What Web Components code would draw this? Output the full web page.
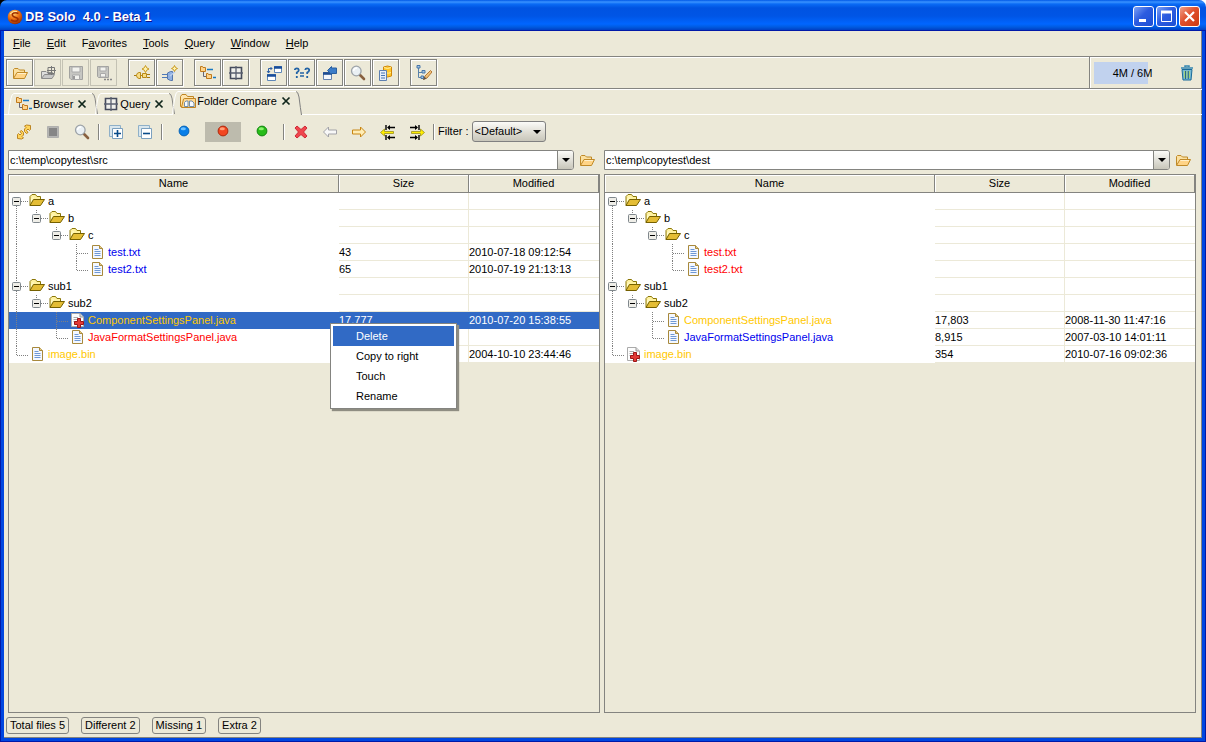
<!DOCTYPE html>
<html lang="en">
<head>
<meta charset="utf-8">
<title>DB Solo 4.0 - Beta 1</title>
<style>
html,body{margin:0;height:100%}
body{background:linear-gradient(90deg,#000 50%,#fff 50%);font:11px/17px "Liberation Sans",sans-serif;color:#000;overflow:hidden}
</style>
</head>
<body>
<db-app></db-app>
<script>
const ICONS = {
  logo:'<defs><radialGradient id="g" cx=".4" cy=".25" r=".8"><stop offset="0" stop-color="#ffd070"/><stop offset=".45" stop-color="#f07818"/><stop offset="1" stop-color="#8c2400"/></radialGradient></defs><circle cx="8" cy="8" r="7.300" fill="url(#g)"/><path d="M11.500 4.500C8 3 4.500 4 5.500 6.500S11.500 8 11 10.500S6 12.500 4 11" fill="none" stroke="#a03000" stroke-width="1.600"/><path d="M3 5Q6 1.500 10 2.500" stroke="#ffe8a0" fill="none"/>',
  open:'<path d="M1.500 13V4.500L2.500 3.500H6L7.500 5H12.500V7" fill="#fbe0a0" stroke="#c08a28"/><path d="M1.500 13.500L5 7.500H15.500L12.500 13.500Z" fill="#ffd487" stroke="#c08a28"/><path d="M5.500 8.500H14" stroke="#fff0cc"/>',
  openSql:'<path d="M1.500 13V6.500H6L7 7.500H12.500V9" fill="#ddd" stroke="#8c8c8c"/><path d="M1.500 13.500L4.500 9.500H14.500L12 13.500Z" fill="#c8c8c8" stroke="#8c8c8c"/><path d="M8 2.500H14.500V8.500H8ZM11.500 1V10M7 5.500H16" fill="none" stroke="#777"/>',
  save:'<path d="M1.500 1.500H14.500V14.500H3L1.500 13Z" fill="#c6c6c2" stroke="#a2a2a0"/><path d="M4 2H12V7H4ZM4.500 10H11.500V14.500H4.500Z" fill="#f2f2ee" stroke="#aaa"/><path d="M6 11V14" stroke="#999" stroke-width="2"/>',
  saveAs:'<path d="M1.500 1.500H12.500V12.500H2.500L1.500 11.500Z" fill="#c6c6c2" stroke="#a2a2a0"/><path d="M4 2H10V6H4ZM4.500 8.500H9.500V12H4.500Z" fill="#f2f2ee" stroke="#aaa"/><path d="M8 14.500H10M11 14.500H13M14 14.500H16" stroke="#888" stroke-width="1.500"/>',
  connect:'<path d="M0 10.500H3M13 9.500H16M13 12.500H16" stroke="#a87a10"/><path d="M6.500 7.500H5Q2.500 8 2.500 10.500T5 13.500H6.500ZM8.500 8.500H12.500V12.500H8.500ZM6.500 10.500H8.500" fill="#f9dd84" stroke="#b88a18"/><path d="M11.500 .5L12.700 2.800L15 4L12.700 5.200L11.500 7.500L10.300 5.200L8 4L10.300 2.800Z" fill="#fff3b0" stroke="#c9981c"/>',
  disconnect:'<path d="M0 9.500H6M0 12.500H6" stroke="#4d79b8"/><path d="M5.500 8L8.500 6.500H10.500V15.500H8.500L5.500 14Z" fill="#8fb0e2" stroke="#5577ad"/><path d="M8 11L13 6.500" stroke="#b5cbee" stroke-width="1.500"/><path d="M12.500 .5L13.500 2.500L15.500 3.500L13.500 4.500L12.500 6.500L11.500 4.500L9.500 3.500L11.500 2.500Z" fill="#fff3b0" stroke="#c9981c"/>',
  tree:'<path d="M3.500 6V11.500H6" fill="none" stroke="#667"/><path d="M.5 1.500H2.500L3 2.500H5.500V6.500H.5ZM6.500 8.500H8L8.500 9.500H11.500V13.500H6.500Z" fill="#ffd48b" stroke="#c07a1c"/><path d="M7 4.500H13M13 12.500H16" stroke="#1878c0" stroke-width="1.600"/>',
  grid:'<path d="M2.500 2.500H13.500V13.500H2.500Z" fill="#f0f0ec" stroke="#454b5c" stroke-width="1.600"/><path d="M8 1V15M1 8H15" stroke="#5a6070" stroke-width="1.300"/>',
  compare:'<path d="M8.500 1.500H15.500V7.500H8.500ZM1.500 9.500H9.500V15.500H1.500Z" fill="#fff" stroke="#5f87b8"/><path d="M8 2.500H16M1 10.500H10" stroke="#184d9b" stroke-width="2.600"/><path d="M2.500 8V3.500H6M1 6L2.500 8L4 6M4.500 2L6 3.500L4.500 5" stroke="#2d5fa5" fill="none"/>',
  sync:'<path d="M1.500 7.500H9.500V14.500H1.500Z" fill="#f4f7fc" stroke="#6583b0"/><path d="M1 8.500H10" stroke="#1d4c92" stroke-width="2.600"/><path d="M5.500 5.500L9.500 1.500V3H14.500V8.500H9.500V9.500Z" fill="#3b7cc8" stroke="#2a5f9f"/>',
  diff:'<path d="M.8 5Q1 3.300 2.800 3.300T4.800 5Q4.800 6.500 2.800 7.500V9M2.800 11V13M11.200 5Q11.400 3.300 13.200 3.300T15.200 5Q15.200 6.500 13.200 7.500V9M13.200 11V13" fill="none" stroke="#2263a5" stroke-width="1.800"/><path d="M6 8H10M6 11H10" stroke="#2263a5" stroke-width="1.300"/>',
  search:'<path d="M9.500 9.500L14 14" stroke="#886040" stroke-width="2.600" stroke-linecap="round"/><circle cx="6.300" cy="6" r="4.800" fill="#eaf0f4" stroke="#9da3a8" stroke-width="1.300"/><path d="M3.500 6Q4 3 7 3" stroke="#fff" fill="none" stroke-width="1.500"/>',
  copyDb:'<path d="M5.500 2Q9.500 0 13.500 2V11Q9.500 13 5.500 11Z" fill="#ffc62c" stroke="#d0880a"/><path d="M6 2.500Q9.500 4.500 13 2.500M8 8Q11 8.500 13 7.500" stroke="#fff0a0" fill="none"/><path d="M1.500 5.500H8.500V15.500H1.500Z" fill="#e7eef9" stroke="#5d7fb0"/><path d="M3 8H7M3 10.500H7M3 13H7" stroke="#4675b2"/>',
  treeEdit:'<path d="M2.500 2V12.500H7M2.500 7.500H7" fill="none" stroke="#5881aa"/><path d="M1 .5H4V3H1ZM6 5.500H9V8H6ZM5 11H7.500V13.500H5Z" fill="#a7c5e4" stroke="#4776a8"/><path d="M7.500 14.500L9 11L14.500 5.500L16 7L11 13Z" fill="#efc078" stroke="#a66118" stroke-width=".8"/><path d="M7 15L8.500 11.800L10.500 13.500Z" fill="#555"/>',
  trash:'<path d="M3 4.500H13L12 15H4Z" fill="#78bad2" stroke="#176a9a"/><path d="M2 3H14M6 2V1H10V2" fill="none" stroke="#3586b0" stroke-width="1.500"/><path d="M5.500 6V13M8 6V13M10.500 6V13" stroke="#9fd07a"/><path d="M6.500 6V14M9.300 6V14" stroke="#26678a"/>',
  folders:'<path d="M.5 13.500V3.500L2 1.500H6L7.500 3.500H13.500V13.500Z" fill="#ffe6ae" stroke="#c18522"/><path d="M1.500 14.500L3.500 6Q4 5.500 5 5.500H15.500V14.500Z" fill="#ffd890" stroke="#c18522"/><path d="M4.500 13.500V9.500L6 8H8V13.500ZM9.500 13.500V8H12L14 10V13.500Z" fill="#f7fbff" stroke="#728eaa"/>',
  close:'<path d="M4.500 4.500L11.500 11.500M11.500 4.500L4.500 11.500" stroke="#10261b" stroke-width="1.700"/>',
  refresh:'<path d="M8.500 7.500V5L10 3.500L8.500 2L10.500 1L14.500 1.500V5.500L13.500 6.500L12 5L10.500 6.500L12 8.500L10.500 9.500Z" fill="#ffd55c" stroke="#b67a14" stroke-width=".9"/><path d="M7.500 8.500V11L6 12.500L7.500 14L5.500 15L1.500 14.500V10.500L2.500 9.500L4 11L5.500 9.500L4 7.500L5.500 6.500Z" fill="#ffd55c" stroke="#b67a14" stroke-width=".9"/>',
  stop:'<path d="M2.500 2.500H13.500V13.500H2.500Z" fill="#b5b5b3" stroke="#b0b0ae"/><path d="M4 4H12V12H4Z" fill="#868686"/>',
  expand:'<path d="M1.500 1.500H12.500V12.500H1.500Z" fill="#d9e6ed" stroke="#8fb0c8"/><path d="M4.500 4.500H14.500V14.500H4.500Z" fill="#fff" stroke="#7ba0bf"/><path d="M6 9.500H13M9.500 6V13" stroke="#084b89" stroke-width="1.600"/>',
  collapse:'<path d="M1.500 1.500H12.500V12.500H1.500Z" fill="#d9e6ed" stroke="#8fb0c8"/><path d="M4.500 4.500H14.500V14.500H4.500Z" fill="#fff" stroke="#7ba0bf"/><path d="M6 9.500H13" stroke="#084b89" stroke-width="1.600"/>',
  blue:'<circle cx="8" cy="7" r="4.900" fill="#087ee8" stroke="#0864b7"/><ellipse cx="7.300" cy="4.800" rx="2.600" ry="1.500" fill="#70c2ff"/>',
  red:'<circle cx="8" cy="7" r="4.900" fill="#f24620" stroke="#ae2a0e"/><ellipse cx="7.300" cy="4.800" rx="2.600" ry="1.500" fill="#ff9f78"/>',
  green:'<circle cx="8" cy="7" r="4.900" fill="#27bc18" stroke="#148511"/><ellipse cx="7.300" cy="4.800" rx="2.600" ry="1.500" fill="#8cf26f"/>',
  remove:'<path d="M2 4L4 2L8 5.500L12 2L14 4L10.500 8L14 12L12 14L8 10.500L4 14L2 12L5.500 8Z" fill="#f0464e" stroke="#cf2a36"/>',
  left:'<path d="M1.500 8L6.500 3V6H14.500V10H6.500V13Z" fill="#f8f8f8" stroke="#a3a3a8"/>',
  right:'<path d="M14.500 8L9.500 3V6H1.500V10H9.500V13Z" fill="#ffedb5" stroke="#c88614"/>',
  allLeft:'<path d="M.5 8.500L4.500 5V7.500H13.500V9.500H4.500V12Z" fill="#ffee00" stroke="#9a9020" stroke-width=".8"/><path d="M8 3.500H15M8 13.500H15M6 1V6M6 11V16" stroke="#000" stroke-width="1.400"/><path d="M7 3.500L10 1V6ZM7 13.500L10 11V16Z"/>',
  allRight:'<path d="M15.500 8.500L11.500 5V7.500H2.500V9.500H11.500V12Z" fill="#ffee00" stroke="#9a9020" stroke-width=".8"/><path d="M1 3.500H8M1 13.500H8M10 1V6M10 11V16" stroke="#000" stroke-width="1.400"/><path d="M9 3.500L6 1V6ZM9 13.500L6 11V16Z"/>',
  folder:'<path d="M1 12.500V3.500L3 1.500H6.500L8 3.500H11.500V6" fill="#fff2a0" stroke="#8a7608"/><path d="M1 12.500L4.500 6.500H15.500L11.500 12.500Z" fill="#e4bd35" stroke="#756000"/><path d="M2.500 5.500V8M4 4V6" stroke="#fffbd0"/>',
  file:'<path d="M3.500 1.500H10.500L13.500 4.500V14.500H3.500Z" fill="#f4f8ff" stroke="#a8893c"/><path d="M10.500 1.500V4.500H13.500" fill="#e4cc88" stroke="#a8893c"/><path d="M5.500 5.500H9.500M5.500 7.500H11.500M5.500 9.500H11.500M5.500 11.500H11.500" stroke="#6f98d4"/>',
  fileAdd:'<path d="M2.500 1.500H11L14.500 5V14.500H2.500Z" fill="#fdfdfd" stroke="#aaa"/><path d="M11 1.500V5H14" fill="#ddd" stroke="#999"/><path d="M4.500 5.500H9M4.500 7.500H8M4.500 9.500H6" stroke="#aaa"/><path d="M8.500 6.500H11.500V9.500H14.500V12.500H11.500V15.500H8.500V12.500H5.500V9.500H8.500Z" fill="#e33a35" stroke="#9c1515"/>',
  caret:'<path d="M4 6H12L8 10Z" fill="#000"/>'
};
const svg = n => `<svg width="16" height="16" viewBox="0 0 16 16" aria-hidden="true">${ICONS[n]}</svg>`;
const define = (tag, css, html) => customElements.define(tag, class extends HTMLElement {
  connectedCallback() {
    if (this.shadowRoot) return;
    const root = this.attachShadow({mode:'open'});
    root.innerHTML = `<style>*{box-sizing:border-box}button,input,select{font:inherit;color:inherit;margin:0}svg{display:block}${css}</style>` + (typeof html === 'function' ? html(this) : html);
  }
});

define('ui-icon', ':host{display:block;width:16px;height:16px;flex:none}', h => svg(h.getAttribute('name')));

define('title-bar', `
:host{display:flex;align-items:center;gap:2px;height:30px;flex:none;padding:3px 6px 0 7px;box-sizing:border-box;border-radius:7px 7px 0 0;
background:linear-gradient(#0058e6 0,#3a93ff 2px,#0a6bf5 4px,#0053e1 8px,#0055e5 16px,#0066ff 24px,#005be0 27px,#0040c4 30px);color:#fff}
h1{margin:0;font:bold 13px/18px "Liberation Sans",sans-serif;white-space:pre;flex:1;text-shadow:1px 1px #0f1089}
button{width:21px;height:21px;padding:2px;border:1px solid #fff;border-radius:3px;background:linear-gradient(135deg,#7da2f5,#2c5ce0 45%,#1c4fd4)}
.x{background:linear-gradient(135deg,#f0a08a,#e0502c 45%,#cc3a10)}`,
`<ui-icon name="logo"></ui-icon><h1>DB Solo  4.0 - Beta 1</h1>
<button aria-label="Minimize"><svg width="15" height="15"><path d="M3 10H10V13H3Z" fill="#fff"/></svg></button>
<button aria-label="Maximize"><svg width="15" height="15"><path d="M2.500 3V12.500H12.500V3" fill="none" stroke="#fff"/><path d="M2 3H13" stroke="#fff" stroke-width="3"/></svg></button>
<button class="x" aria-label="Close"><svg width="15" height="15"><path d="M3 3L12 12M12 3L3 12" stroke="#fff" stroke-width="2.200"/></svg></button>`);

define('menu-bar', ':host{display:flex;height:26px;flex:none;padding:0 1px;box-sizing:border-box}', '<slot></slot>');
define('menu-entry', ':host{display:flex}button{border:0;background:none;padding:0 8px}', '<button><slot></slot></button>');

define('tool-bar', `
:host{display:flex;height:33px;flex:none;box-sizing:border-box;border-top:1px solid #848480;border-bottom:1px solid #848480;box-shadow:inset 0 1px #fff,0 1px #fff}
.buttons{display:flex;flex:1;gap:10px;padding:2px;border-right:1px solid #848480}
::slotted(memory-meter){flex:none}`, '<div class="buttons"><slot></slot></div><slot name="end"></slot>');
define('tool-group', ':host{display:flex}', '<slot></slot>');
define('tool-button', `
:host{display:block;width:28px}
button{display:grid;place-items:center;width:27px;height:27px;padding:0;background:none;border:1px solid #848480;box-shadow:inset 1px 1px #fff,1px 1px #fff}
button:disabled{border-color:#c4c2b4;box-shadow:none}`,
h => `<button aria-label="${h.getAttribute('label')}"${h.hasAttribute('disabled')?' disabled':''}>${svg(h.getAttribute('icon'))}</button>`);
define('memory-meter', `
:host{display:flex;align-items:center;justify-content:space-between;width:112px;padding:0 6px 0 4px;box-sizing:border-box;border-right:1px solid #848480;box-shadow:inset 1px 0 #fff}
.bar{width:77px;height:22px;line-height:22px;text-align:center;background:linear-gradient(#c1d2ee,#c1d2ee) 0 0/54px 100% no-repeat}
button{border:0;padding:0;background:none}`,
`<div class="bar">4M / 6M</div><button aria-label="Collect garbage">${svg('trash')}</button>`);

define('tab-strip', ':host{display:flex;align-items:flex-end;height:26px;flex:none;padding-left:4px;box-sizing:border-box;border-bottom:1px solid #fff}', '<slot></slot>');
define('tab-item', `
:host{display:flex;height:21px}
:host(:not(:first-child)){margin-left:-3px}
:host([active]){height:24px;margin-bottom:-1px;background:linear-gradient(#ece9d8,#ece9d8) 0 100%/100% 1px no-repeat}
.face{display:flex;align-items:center;gap:1px;border-top:1px solid #fff;padding:0 2px}
:host([active]) .face{padding-bottom:5px}
button{border:0;background:none;padding:0}
.label{display:flex;align-items:center;gap:1px}
.edge{width:6px;height:100%;flex:none}`,
h => `<svg class="edge" viewBox="0 0 6 24" preserveAspectRatio="none"><path d="M.5 24Q1 16 3 6Q4 .5 6 .5" fill="none" stroke="#fff"/></svg>
<div class="face"><button class="label">${svg(h.getAttribute('icon'))}<slot></slot></button><button aria-label="Close tab">${svg('close')}</button></div>
<svg class="edge" viewBox="0 0 6 24" preserveAspectRatio="none"><path d="M0 .5Q2 .5 3 6Q4.500 18 5.500 24" fill="none" stroke="#808080"/></svg>`);

define('compare-tools', `
:host{display:flex;align-items:center;gap:3px;height:33px;flex:none;padding-left:7px;box-sizing:border-box}
button{display:grid;place-items:center;width:26px;height:20px;padding:0;border:0;background:none}
.wide{width:36px}.on{background:#bdbbad}
i{width:2px;height:16px;border-left:1px solid #848480;border-right:1px solid #fff}
.select{position:relative;height:21px}
select{appearance:none;height:21px;width:74px;padding:0 2px;border:1px solid #808080;border-radius:3px;background:linear-gradient(#fbfbf8,#dcdad0 60%,#c8c6ba)}
.select svg{position:absolute;right:1px;top:3px;pointer-events:none}`,
() => { const b=(i,c='')=>`<button class="${c}" aria-label="${i}">${svg(i)}</button>`;
return b('refresh')+b('stop')+b('search')+'<i></i>'+b('expand')+b('collapse')+'<i></i>'+b('blue','wide')+b('red','wide on')+b('green','wide')+'<i></i>'+
['remove','left','right','allLeft','allRight'].map(n=>b(n)).join('')+`<i></i><label for="f">Filter :</label><span class="select"><select id="f"><option>&lt;Default&gt;</option></select>${svg('caret')}</span>`; });

define('path-combo', `
:host{display:flex;height:20px;flex:none}
.box{display:flex;flex:1;border:1px solid #848480;background:#fff;border-radius:0 3px 3px 0}
input{flex:1;min-width:0;border:0;padding:0 1px;background:#fff;outline:0;font:11px/18px "Liberation Sans",sans-serif}
button{border:0;padding:0;background:none;display:grid;place-items:center}
.drop{width:16px;border-left:1px solid #848480;border-radius:0 2px 2px 0;background:linear-gradient(#fbfbf8,#c8c6ba)}
.browse{width:26px}`,
h => `<div class="box"><input aria-label="Folder" value="${h.getAttribute('value')}"><button class="drop" aria-label="Show recent">${svg('caret')}</button></div><button class="browse" aria-label="Browse">${svg('open')}</button>`);

/* One 20px tree column per depth: space = empty, | = pass through, t = branch, l = last branch,
   d / u / m = expander joined below, above, or on both sides. */
const GUIDE = {
  ' ':'', '|':'M7.500 0V17', 't':'M7.500 0V17M8 9.500H20', 'l':'M7.500 0V9M8 9.500H20',
  'd':'M7.500 13V17M12 8.500H20', 'u':'M7.500 0V4M12 8.500H20', 'm':'M7.500 0V4M7.500 13V17M12 8.500H20'
};
const guide = c => `<svg width="20" height="17"><path d="${GUIDE[c]}" stroke="#808080" stroke-dasharray="1 1" fill="none"/>${'dum'.includes(c)?'<rect x="3.500" y="4.500" width="8" height="8" rx="1" fill="#efeee8" stroke="#7f878c"/><path d="M5 8.500H10" stroke="#000"/>':''}</svg>`;
define('file-tree', `
:host{display:block;flex:1;border:1px solid #848480;position:relative}
table{width:100%;table-layout:fixed;border-spacing:0}
.n{width:130px}
th{height:18px;padding:0;font-weight:normal;line-height:17px;border-right:1px solid #848480;border-bottom:1px solid #848480;box-shadow:inset 1px 1px #fff}
td{height:17px;padding:0;line-height:16px;background:#fff;border-bottom:1px solid #ece9d8;white-space:nowrap}
td:nth-child(2){border-right:1px solid #ece9d8}
td:first-child{border:0}
.name{display:flex;height:17px;line-height:17px}
.name span{margin-left:3px}
.blue{color:#00e}.red{color:#f00}.gold{color:#ffc800}
.sel td{background:#316ac5;border-color:#316ac5;color:#fff}`,
h => `<table><colgroup><col><col class="n"><col class="n"></colgroup><thead><tr><th>Name</th><th>Size</th><th>Modified</th></tr></thead><tbody>` +
 ROWS[h.getAttribute('side')].map(([g,ic,n,c,s,m,sel]) => `<tr class="${sel||''}"><td><div class="name">${[...g].map(guide).join('')}${svg(ic)}<span class="${c}">${n}</span></div></td><td>${s||''}</td><td>${m||''}</td></tr>`).join('') + '</tbody></table><slot></slot>');
const ROWS = {
 left:[['d','folder','a',''],['|u','folder','b',''],['| u','folder','c',''],
  ['|  t','file','test.txt','blue','43','2010-07-18 09:12:54'],['|  l','file','test2.txt','blue','65','2010-07-19 21:13:13'],
  ['m','folder','sub1',''],['|u','folder','sub2',''],
  ['| t','fileAdd','ComponentSettingsPanel.java','gold','17,777','2010-07-20 15:38:55','sel'],
  ['| l','file','JavaFormatSettingsPanel.java','red'],['l','file','image.bin','gold','','2004-10-10 23:44:46']],
 right:[['d','folder','a',''],['|u','folder','b',''],['| u','folder','c',''],
  ['|  t','file','test.txt','red'],['|  l','file','test2.txt','red'],
  ['m','folder','sub1',''],['|u','folder','sub2',''],
  ['| t','file','ComponentSettingsPanel.java','gold','17,803','2008-11-30 11:47:16'],
  ['| l','file','JavaFormatSettingsPanel.java','blue','8,915','2007-03-10 14:01:11'],['l','fileAdd','image.bin','gold','354','2010-07-16 09:02:36']]
};

define('context-menu', `
:host{position:absolute;left:321px;top:148px;display:block;width:127px;box-sizing:border-box;border:1px solid #848480;padding:2px;background:#fff;box-shadow:2px 2px 1px #8f8d82}
button{display:block;width:100%;height:20px;padding:0 23px;border:0;background:none;text-align:left}
.on{background:#316ac5;color:#fff}`,
`<button class="on">Delete</button><button>Copy to right</button><button>Touch</button><button>Rename</button>`);

define('compare-pane', ':host{display:flex;flex-direction:column;gap:4px;min-width:0}', '<slot></slot>');
define('status-bar', ':host{display:flex;align-items:center;gap:12px;flex:none;padding:4px 2px}', '<slot></slot>');
define('status-badge', ':host{display:block;height:17px;line-height:15px;box-sizing:border-box;border:1px solid #848480;border-radius:3px;padding:0 3px}', '<slot></slot>');

define('db-app', `
:host{display:flex;flex-direction:column;height:100vh}
.client{display:flex;flex-direction:column;flex:1;min-height:0;border:solid #0046e0;border-width:0 4px 4px;box-shadow:inset -1px 0 #848480,inset 0 -1px #848480;background:#ece9d8;outline:1px solid #0019a8;outline-offset:-1px;clip-path:inset(0)}
.panes{display:grid;grid-template-columns:1fr 1fr;gap:4px;flex:1;min-height:0;padding:2px 6px 0 4px}`,
`<title-bar></title-bar><div class="client">
<menu-bar><menu-entry><u>F</u>ile</menu-entry><menu-entry><u>E</u>dit</menu-entry><menu-entry>F<u>a</u>vorites</menu-entry><menu-entry><u>T</u>ools</menu-entry><menu-entry><u>Q</u>uery</menu-entry><menu-entry><u>W</u>indow</menu-entry><menu-entry><u>H</u>elp</menu-entry></menu-bar>
<tool-bar>
<tool-group><tool-button icon="open" label="Open"></tool-button><tool-button icon="openSql" label="Open query" disabled></tool-button><tool-button icon="save" label="Save" disabled></tool-button><tool-button icon="saveAs" label="Save as" disabled></tool-button></tool-group>
<tool-group><tool-button icon="connect" label="Connect"></tool-button><tool-button icon="disconnect" label="Disconnect"></tool-button></tool-group>
<tool-group><tool-button icon="tree" label="Browser"></tool-button><tool-button icon="grid" label="Query"></tool-button></tool-group>
<tool-group><tool-button icon="compare" label="Compare schemas"></tool-button><tool-button icon="diff" label="Compare data"></tool-button><tool-button icon="sync" label="Synchronize"></tool-button><tool-button icon="search" label="Search"></tool-button><tool-button icon="copyDb" label="Copy"></tool-button></tool-group>
<tool-group><tool-button icon="treeEdit" label="Edit tree"></tool-button></tool-group>
<memory-meter slot="end"></memory-meter>
</tool-bar>
<tab-strip><tab-item icon="tree">Browser</tab-item><tab-item icon="grid">Query</tab-item><tab-item icon="folders" active>Folder Compare</tab-item></tab-strip>
<compare-tools></compare-tools>
<div class="panes">
<compare-pane><path-combo value="c:\\temp\\copytest\\src"></path-combo><file-tree side="left"><context-menu></context-menu></file-tree></compare-pane>
<compare-pane><path-combo value="c:\\temp\\copytest\\dest"></path-combo><file-tree side="right"></file-tree></compare-pane>
</div>
<status-bar><status-badge>Total files 5</status-badge><status-badge>Different 2</status-badge><status-badge>Missing 1</status-badge><status-badge>Extra 2</status-badge></status-bar>
</div>`);
</script>
</body>
</html>
